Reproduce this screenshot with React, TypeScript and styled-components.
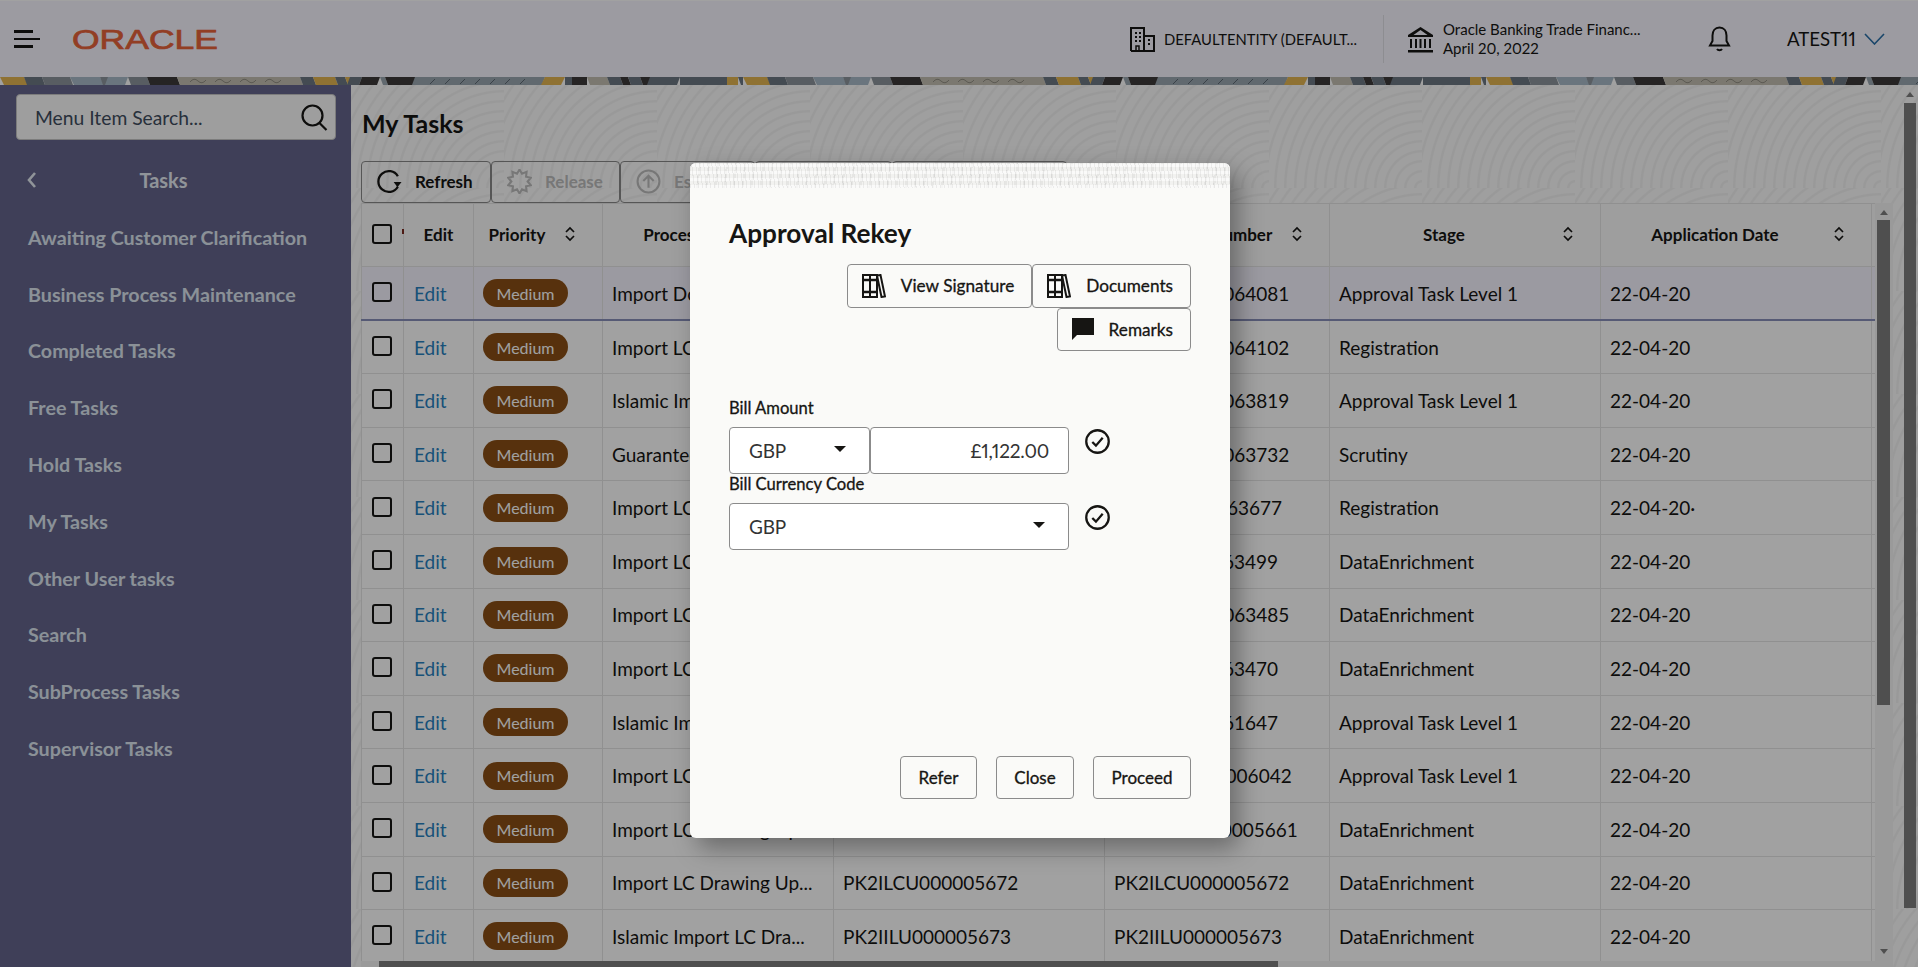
import styled, { createGlobalStyle } from "styled-components";

const GlobalStyle = createGlobalStyle`
  html, body { margin: 0; padding: 0; height: 100%; overflow: hidden; }
  body { font-family: Lato, "Noto Sans", sans-serif; color: #161513; background: #fff; }
  #root { height: 100%; }
  * { box-sizing: border-box; }
`;

const Page = styled.div`
  position: relative;
  display: flex;
  flex-direction: column;
  height: 967px;
  overflow: hidden;
`;

const Header = styled.header`
  display: flex;
  align-items: center;
  height: 77px;
  background: #f7f6ff;
  border-top: 1px solid #fff;
`;

const MenuButton = styled.div`
  display: flex;
  flex-direction: column;
  gap: 5px;
  width: 26px;
  margin-left: 14px;
  span { display: block; height: 2.5px; width: 19px; background: #161513; }
  span:nth-child(2) { width: 26px; }
`;

const Logo = styled.svg`
  width: 147px;
  height: 24px;
  margin-left: 32px;
  overflow: visible;
  text { font-family: "Liberation Sans", sans-serif; font-size: 27px; font-weight: 400; fill: #e8623a; stroke: #e8623a; stroke-width: 0.7; }
`;

const HeaderRight = styled.div`
  display: flex;
  align-items: center;
  margin-left: auto;
  height: 100%;
`;

const Entity = styled.div`
  display: flex;
  align-items: center;
  gap: 9px;
  font-size: 14.8px;
  color: #161513;
  width: 253px;
`;

const HeaderDivider = styled.div`
  width: 1px;
  height: 48px;
  background: #dfdfe6;
`;

const Branch = styled.div`
  display: flex;
  align-items: center;
  gap: 9px;
  margin-left: 23px;
  width: 301px;
`;

const BranchText = styled.div`
  font-size: 15px;
  line-height: 19px;
  color: #161513;
  font-feature-settings: "pnum";
`;

const BellWrap = styled.div`
  display: flex;
  width: 79px;
`;

const UserName = styled.div`
  display: flex;
  align-items: center;
  gap: 8px;
  margin-top: -1px;
  font-size: 18.6px;
  width: 131px;
  font-feature-settings: "pnum";
  svg { margin-top: 1px; }
`;

const Body = styled.div`
  display: flex;
  flex: 1;
  min-height: 0;
`;

const Sidebar = styled.nav`
  width: 351px;
  flex: none;
  background: #64648c;
  padding: 9px 15px 0 16px;
`;

const SearchBox = styled.div`
  display: flex;
  align-items: center;
  justify-content: space-between;
  height: 46px;
  padding: 0 7px 0 18px;
  background: #fbfbfb;
  border: 1px solid #c4c4c4;
  border-radius: 4px;
  font-size: 19.3px;
  color: #3f4c5e;
`;

const SideTitle = styled.div`
  display: flex;
  align-items: center;
  height: 44px;
  margin-top: 18px;
  padding-left: 10px;
  font-size: 20px;
  font-weight: 700;
  color: #e4ebf2;
  span { flex: 1; text-align: center; padding-right: 38px; margin-left: -9px; }
`;

const SideList = styled.ul`
  list-style: none;
  margin: 7px 0 0;
  padding: 0;
`;

const SideItem = styled.li`
  display: flex;
  align-items: center;
  height: 56.8px;
  margin-left: 12px;
  font-size: 19.7px;
  font-weight: 700;
  white-space: nowrap;
  color: #dde6f0;
`;

const Main = styled.main`
  display: flex;
  flex: 1;
  min-width: 0;
  background-color: #fcfcfc;
  background-image: repeating-radial-gradient(circle at 100% 100%, rgba(0,0,0,0) 0 5px, rgba(0,0,0,.036) 6px 7.5px, rgba(0,0,0,0) 8.5px 10px);
  background-size: 153px 103px;
  border-top-left-radius: 4px;
`;

const Content = styled.div`
  display: flex;
  flex-direction: column;
  width: 1542px;
  flex: none;
  padding-left: 10px;
`;

const PageTitle = styled.h1`
  margin: 0;
  height: 76px;
  padding: 23px 0 0 1px;
  font-size: 25px;
  line-height: 30px;
  font-weight: 700;
`;

const Toolbar = styled.div`
  display: flex;
  height: 42px;
  flex: none;
`;

const ToolButton = styled.button<{ $w: number; $off?: boolean }>`
  display: flex;
  align-items: center;
  gap: 13px;
  width: ${(p) => p.$w}px;
  height: 42px;
  padding: 0 0 2px 15px;
  background: transparent;
  border: 1px solid #888;
  border-radius: 4px;
  font-family: inherit;
  font-size: 17px;
  font-weight: 700;
  color: ${(p) => (p.$off ? "#bdbdbd" : "#161513")};
`;

const TableArea = styled.div`
  display: flex;
  height: 758px;
  flex: none;
`;

const TableWrap = styled.div`
  width: 1514px;
  flex: none;
  overflow: hidden;
`;

const Table = styled.table`
  width: 1514px;
  table-layout: fixed;
  border-collapse: collapse;
  background: #fff;
`;

const Col = styled.col<{ $w: number }>`
  width: ${(p) => p.$w}px;
`;

const Th = styled.th`
  height: 63px;
  padding: 0 0 2px;
  border: 1px solid #e5e5e5;
  font-size: 17px;
  font-weight: 700;
  color: #161513;
  background: #fafafa;
`;

const ThInner = styled.div`
  display: flex;
  align-items: center;
  span { flex: 1; text-align: center; white-space: nowrap; }
  svg { flex: none; margin: 0 27px 0 5px; }
`;

const Row = styled.tr<{ $active?: boolean }>`
  height: 53.6px;
  background: ${(p) => (p.$active ? "#f6f4ff" : "#ffffff")};
  ${(p) => (p.$active ? "border-bottom: 2px solid #898fba;" : "")}
`;

const Td = styled.td`
  padding: 0 9px;
  border-left: 1px solid #e5e5e5;
  border-right: 1px solid #e5e5e5;
  border-bottom: 1px solid #e5e5e5;
  font-size: 19px;
  color: #161513;
  white-space: nowrap;
  overflow: hidden;
  text-overflow: ellipsis;
`;

const CheckCell = styled.td`
  padding: 0 0 2px 10px;
  border-left: 1px solid #e5e5e5;
  border-right: 1px solid #e5e5e5;
  border-bottom: 1px solid #e5e5e5;
`;

const HeadCheckCell = styled.th`
  position: relative;
  padding: 0 0 3px 10px;
  border: 1px solid #e5e5e5;
  background: #fafafa;
  &::after {
    content: "";
    position: absolute;
    top: 25px;
    right: -1px;
    width: 2px;
    height: 5px;
    background: #7a2a20;
  }
`;

const Checkbox = styled.div`
  width: 20px;
  height: 20px;
  border: 2px solid #161513;
  border-radius: 3px;
  background: transparent;
`;

const EditLink = styled.a`
  margin-left: 1px;
  color: #2780bf;
  font-size: 19px;
`;

const Pill = styled.span`
  display: inline-flex;
  align-items: center;
  justify-content: center;
  width: 85px;
  height: 28px;
  border-radius: 14px;
  background: #8a4f15;
  color: #ffffff;
  font-size: 16px;
`;

const Scrollbar = styled.div<{ $w: number; $pad: number }>`
  display: flex;
  flex-direction: column;
  align-items: flex-start;
  width: ${(p) => p.$w}px;
  flex: none;
  padding-left: ${(p) => p.$pad}px;
`;

const Arrow = styled.div<{ $down?: boolean; $top: number; $bottom: number; $left: number }>`
  width: 0;
  height: 0;
  margin: ${(p) => p.$top}px 0 ${(p) => p.$bottom}px ${(p) => p.$left}px;
  border-left: 4px solid transparent;
  border-right: 4px solid transparent;
  ${(p) => (p.$down ? "border-top: 5px solid #7e7e7e; margin-top: auto;" : "border-bottom: 5px solid #7e7e7e;")}
`;

const Thumb = styled.div<{ $w: number; $h: number }>`
  width: ${(p) => p.$w}px;
  height: ${(p) => p.$h}px;
  background: #7e7e7e;
  flex: none;
`;

const InnerTrack = styled(Scrollbar)`
  background: #f4f4f4;
`;

const HScroll = styled.div`
  height: 6px;
  padding-left: 18px;
  background: #f4f4f4;
  div { width: 899px; height: 6px; background: #7e7e7e; }
`;

const Overlay = styled.div`
  position: absolute;
  inset: 0;
  z-index: 10;
  display: flex;
  justify-content: center;
  align-items: flex-start;
  padding: 163px 0 0 2px;
  background: rgba(0, 0, 0, 0.37);
`;

const Modal = styled.div`
  display: flex;
  flex-direction: column;
  width: 540px;
  height: 675px;
  background: #fafaf8;
  border-radius: 6px;
  box-shadow: 8px 10px 24px rgba(0, 0, 0, 0.35);
  overflow: hidden;
`;

const ModalBand = styled.div`
  height: 25px;
  flex: none;
  background-color: #f2f2f0;
  background-image:
    repeating-linear-gradient(83deg, rgba(0, 0, 0, 0.06) 0 1px, transparent 1px 4px),
    repeating-linear-gradient(0deg, rgba(255, 255, 255, 0.6) 0 3px, transparent 3px 7px),
    repeating-linear-gradient(97deg, rgba(0, 0, 0, 0.05) 0 2px, transparent 2px 9px);
`;

const ModalBody = styled.div`
  display: flex;
  flex-direction: column;
  flex: 1;
  padding: 0 39px 39px;
`;

const ModalTitle = styled.h2`
  margin: 0;
  padding-top: 29px;
  font-size: 26.2px;
  line-height: 32px;
  font-weight: 700;
`;

const ModalActions = styled.div`
  display: flex;
  flex-wrap: wrap;
  justify-content: flex-end;
  margin-top: 15px;
`;

const ActionButton = styled.button`
  display: flex;
  align-items: center;
  gap: 15px;
  height: 43.5px;
  padding: 0 17px 0 14px;
  background: transparent;
  border: 1px solid #8b8b8b;
  border-radius: 4px;
  font-family: inherit;
  font-size: 17.2px;
  -webkit-text-stroke: 0.3px #161513;
  color: #161513;
`;

const FieldLabel = styled.div<{ $top: number }>`
  height: 19px;
  margin-top: ${(p) => p.$top}px;
  font-size: 16.6px;
  line-height: 19px;
  -webkit-text-stroke: 0.3px #161513;
`;

const FieldRow = styled.div`
  display: flex;
  align-items: flex-start;
  margin-top: 9px;
  svg { margin: 2px 0 0 16px; }
`;

const Control = styled.div<{ $w: number; $right?: boolean }>`
  display: flex;
  align-items: center;
  justify-content: ${(p) => (p.$right ? "flex-end" : "space-between")};
  width: ${(p) => p.$w}px;
  height: 47px;
  padding: 0 19px;
  background: #fff;
  border: 1px solid #8b8b8b;
  border-radius: 4px;
  font-size: 19px;
  color: #333;
  letter-spacing: -0.2px;
  font-feature-settings: "pnum";
`;

const Caret = styled.div`
  width: 0;
  height: 0;
  margin: 0 4px 3px 0;
  border-left: 6px solid transparent;
  border-right: 6px solid transparent;
  border-top: 6px solid #161513;
`;

const ModalFooter = styled.div`
  display: flex;
  justify-content: flex-end;
  gap: 19px;
  margin-top: auto;
`;

const FooterButton = styled.button<{ $w: number }>`
  width: ${(p) => p.$w}px;
  height: 43px;
  background: transparent;
  border: 1px solid #8b8b8b;
  border-radius: 4px;
  font-family: inherit;
  font-size: 17px;
  -webkit-text-stroke: 0.3px #161513;
  color: #161513;
`;

const YEL = "#e3b552";
const DRK = "#3d3a3a";
const SLT = "#6d7883";
const BLU = "#a9bac8";
const WRM = "#c3bfb2";
const MID = "#8c949c";
const LGT = "#9aa6b0";

// x0, x1, colour, lean of the edge
const stripParts: [number, number, string, number][] = [
  [0, 24, YEL, 4], [24, 42, SLT, 3], [42, 70, MID, 3], [70, 100, BLU, 4], [100, 108, MID, 3],
  [108, 128, BLU, -3], [128, 147, MID, 3], [147, 177, DRK, 3], [177, 300, WRM, 3], [300, 313, SLT, 3],
  [313, 335, YEL, 3], [335, 345, SLT, 3], [345, 350, YEL, 3], [350, 362, SLT, -3], [362, 380, DRK, -3],
  [380, 385, LGT, 3], [385, 415, DRK, 3], [415, 545, LGT, -3], [545, 565, YEL, -4], [565, 572, SLT, 0],
  [572, 587, DRK, 0], [587, 607, WRM, 3], [607, 620, SLT, 3], [620, 628, DRK, 3], [628, 640, SLT, 3],
  [640, 650, DRK, 3], [650, 680, SLT, -3], [680, 727, SLT, 0], [727, 738, YEL, 0], [738, 743, SLT, 3],
];

const Strip = () => (
  <svg width="1918" height="8" style={{ display: "block", flex: "none" }}>
    <defs>
      <pattern id="strip" width="743" height="8" patternUnits="userSpaceOnUse">
        {stripParts.map(([a, b, c, lean]) => (
          <polygon key={a} points={`${a},0 ${b},0 ${b + lean},8 ${a + lean},8`} fill={c} />
        ))}
        {[430, 445, 460, 475, 490, 505, 520].map((x) => (
          <path key={x} d={`M${x} 7l5-5`} stroke="#5d6872" strokeWidth="1" />
        ))}
        {[190, 215, 240, 265].map((x) => (
          <path key={x} d={`M${x} 5q4-5 8-1t8-1`} stroke="#918e83" strokeWidth="1" fill="none" />
        ))}
      </pattern>
    </defs>
    <rect width="1918" height="8" fill="url(#strip)" />
  </svg>
);

const BuildingIcon = () => (
  <svg width="25" height="25" viewBox="0 0 25 25" fill="none" stroke="#161513" strokeWidth="2">
    <path d="M1 24V1h13v23M14 9h10v15H1" />
    <path d="M5 6h2M9 6h2M5 10h2M9 10h2M5 14h2M9 14h2M18 13h2M18 17h2" strokeWidth="2" />
    <path d="M6 24v-5h3v5" strokeWidth="1.5" />
  </svg>
);

const BankIcon = () => (
  <svg width="27" height="27" viewBox="0 0 27 27" fill="#161513">
    <path d="M13.5 1L1 9v2h25V9zM13.5 4l7 5h-14z" fillRule="evenodd" />
    <path d="M3 13h2v9H3zM8 13h2v9H8zM12.5 13h2v9h-2zM17 13h2v9h-2zM22 13h2v9h-2zM1 24h25v2.5H1z" />
  </svg>
);

const BellIcon = () => (
  <svg width="23" height="26" viewBox="0 0 23 26" fill="none" stroke="#161513" strokeWidth="2">
    <path d="M11.5 1.5C7 1.5 4.5 5 4.5 9.5V15L2 19.5h19L18.5 15V9.5C18.5 5 16 1.5 11.5 1.5z" />
    <path d="M9 23c1 1.6 4 1.6 5 0" />
  </svg>
);

const SearchIcon = () => (
  <svg width="27" height="27" viewBox="0 0 27 27" fill="none" stroke="#161513" strokeWidth="2.2">
    <circle cx="11.5" cy="11.5" r="10" />
    <path d="M18.5 19l7 7" />
  </svg>
);

const SortIcon = () => (
  <svg width="10" height="16" viewBox="0 0 10 16" fill="none" stroke="#161513" strokeWidth="1.7">
    <path d="M1 6l4-4 4 4M1 10l4 4 4-4" />
  </svg>
);

const RefreshIcon = () => (
  <svg width="25" height="25" viewBox="0 0 24 24" fill="none" stroke="#161513" strokeWidth="2.2">
    <path d="M20 7A10 10 0 1 0 20 17" />
    <path d="M16 12.5h7.5L19.7 17.5z" fill="#161513" stroke="none" />
  </svg>
);

const gearPoints = Array.from({ length: 20 }, (_, i) => {
  const r = i % 2 === 0 ? 11.5 : 7.8;
  const a = (i * Math.PI) / 10;
  return `${(12 + r * Math.sin(a)).toFixed(1)},${(12 - r * Math.cos(a)).toFixed(1)}`;
}).join(" ");

const ReleaseIcon = () => (
  <svg width="25" height="25" viewBox="0 0 24 24" fill="none" stroke="#bdbdbd" strokeWidth="2">
    <polygon points={gearPoints} />
  </svg>
);

const EscalateIcon = () => (
  <svg width="25" height="25" viewBox="0 0 24 24" fill="none" stroke="#bdbdbd" strokeWidth="2">
    <circle cx="12" cy="12" r="10.5" />
    <path d="M12 18V7M7 11.5L12 6.5l5 5" />
  </svg>
);

const BooksIcon = () => (
  <svg width="24" height="24" viewBox="0 0 24 24" fill="none" stroke="#161513" strokeWidth="2">
    <rect x="1" y="1" width="7" height="22" />
    <rect x="8" y="1" width="7" height="22" />
    <path d="M15 1.5l3.5-.5L23 22.5l-3.5.5z" />
    <path d="M1 6h14M1 18h14" strokeWidth="2.4" />
  </svg>
);

const CommentIcon = () => (
  <svg width="22" height="22" viewBox="0 0 22 22" fill="#161513">
    <path d="M0 0h22v17H5l-5 5z" />
  </svg>
);

const CheckCircle = () => (
  <svg width="25" height="25" viewBox="0 0 24 24" fill="none" stroke="#161513" strokeWidth="2.2">
    <circle cx="12" cy="12" r="10.8" />
    <path d="M7 12.5l3.5 3.5L17 8.5" />
  </svg>
);

const menuItems = [
  "Awaiting Customer Clarification",
  "Business Process Maintenance",
  "Completed Tasks",
  "Free Tasks",
  "Hold Tasks",
  "My Tasks",
  "Other User tasks",
  "Search",
  "SubProcess Tasks",
  "Supervisor Tasks",
];

const columns = [42, 70, 129, 231, 271, 225, 271, 271, 4];

const rows = [
  ["Import Documentary Co...", "PK2ILCU000064081", "Approval Task Level 1", "22-04-20"],
  ["Import LC Amendment", "PK2ILCU000064102", "Registration", "22-04-20"],
  ["Islamic Import LC Dra...", "PK2ILCU000063819", "Approval Task Level 1", "22-04-20"],
  ["Guarantee Issuance", "PK2ILCU000063732", "Scrutiny", "22-04-20"],
  ["Import LC Drawing Up...", "PK2IILU000063677", "Registration", "22-04-20·"],
  ["Import LC Drawing Up...", "PK2IIIU000063499", "DataEnrichment", "22-04-20"],
  ["Import LC Drawing Up...", "PK2ILCU000063485", "DataEnrichment", "22-04-20"],
  ["Import LC Drawing Up...", "PK2IIIU000063470", "DataEnrichment", "22-04-20"],
  ["Islamic Import LC Dra...", "PK2IIIU000061647", "Approval Task Level 1", "22-04-20"],
  ["Import LC Drawing Up...", "PK2ILDU000006042", "Approval Task Level 1", "22-04-20"],
  ["Import LC Drawing Up...", "PK2IMCU000005661", "DataEnrichment", "22-04-20"],
  ["Import LC Drawing Up...", "PK2ILCU000005672", "DataEnrichment", "22-04-20"],
  ["Islamic Import LC Dra...", "PK2IILU000005673", "DataEnrichment", "22-04-20"],
];

const App = () => {
  return (
    <Page>
      <GlobalStyle />
      <Header>
        <MenuButton>
          <span />
          <span />
          <span />
        </MenuButton>
        <Logo viewBox="0 0 147 24">
          <text x="0" y="21.5" textLength="146" lengthAdjust="spacingAndGlyphs">ORACLE</text>
        </Logo>
        <HeaderRight>
          <Entity>
            <BuildingIcon />
            <span>DEFAULTENTITY (DEFAULT...</span>
          </Entity>
          <HeaderDivider />
          <Branch>
            <BankIcon />
            <BranchText>
              Oracle Banking Trade Financ...
              <br />
              April 20, 2022
            </BranchText>
          </Branch>
          <BellWrap>
            <BellIcon />
          </BellWrap>
          <UserName>
            ATEST11
            <svg width="21" height="12" viewBox="0 0 21 12" fill="none" stroke="#2a6fa8" strokeWidth="1.6">
              <path d="M1 1l9.5 10L20 1" />
            </svg>
          </UserName>
        </HeaderRight>
      </Header>
      <Strip />
      <Body>
        <Sidebar>
          <SearchBox>
            Menu Item Search...
            <SearchIcon />
          </SearchBox>
          <SideTitle>
            <svg width="12" height="18" viewBox="0 0 12 18" fill="none" stroke="#e4ebf2" strokeWidth="2.6">
              <path d="M9 2L3 9l6 7" />
            </svg>
            <span>Tasks</span>
          </SideTitle>
          <SideList>
            {menuItems.map((item) => (
              <SideItem key={item}>{item}</SideItem>
            ))}
          </SideList>
        </Sidebar>
        <Main>
          <Content>
            <PageTitle>My Tasks</PageTitle>
            <Toolbar>
              <ToolButton $w={130}><RefreshIcon />Refresh</ToolButton>
              <ToolButton $w={129} $off><ReleaseIcon />Release</ToolButton>
              <ToolButton $w={135} $off><EscalateIcon />Escalate</ToolButton>
              <ToolButton $w={137} $off>Reassign</ToolButton>
              <ToolButton $w={175} $off>View Process</ToolButton>
            </Toolbar>
            <TableArea>
              <TableWrap>
                <Table>
                  <colgroup>
                    {columns.map((w, i) => (
                      <Col key={i} $w={w} />
                    ))}
                  </colgroup>
                  <thead>
                    <tr>
                      <HeadCheckCell><Checkbox /></HeadCheckCell>
                      <Th>Edit</Th>
                      <Th><ThInner><span>Priority</span><SortIcon /></ThInner></Th>
                      <Th><ThInner><span>Process Name</span><SortIcon /></ThInner></Th>
                      <Th><ThInner><span>Process Reference Number</span><SortIcon /></ThInner></Th>
                      <Th><ThInner><span>Application Number</span><SortIcon /></ThInner></Th>
                      <Th><ThInner><span>Stage</span><SortIcon /></ThInner></Th>
                      <Th><ThInner><span>Application Date</span><SortIcon /></ThInner></Th>
                      <Th />
                    </tr>
                  </thead>
                  <tbody>
                    {rows.map(([name, ref, stage, date], i) => (
                      <Row key={ref} $active={i === 0}>
                        <CheckCell><Checkbox /></CheckCell>
                        <Td><EditLink>Edit</EditLink></Td>
                        <Td><Pill>Medium</Pill></Td>
                        <Td>{name}</Td>
                        <Td>{ref}</Td>
                        <Td>{ref}</Td>
                        <Td>{stage}</Td>
                        <Td>{date}</Td>
                        <Td />
                      </Row>
                    ))}
                  </tbody>
                </Table>
              </TableWrap>
              <InnerTrack $w={18} $pad={2}>
                <Arrow $top={7} $bottom={5} $left={3} />
                <Thumb $w={13} $h={485} />
                <Arrow $down $top={0} $bottom={7} $left={3} />
              </InnerTrack>
            </TableArea>
            <HScroll><div /></HScroll>
          </Content>
          <Scrollbar $w={25} $pad={11}>
            <Arrow $top={7} $bottom={6} $left={2} />
            <Thumb $w={12} $h={805} />
          </Scrollbar>
        </Main>
      </Body>
      <Overlay>
        <Modal>
          <ModalBand />
          <ModalBody>
            <ModalTitle>Approval Rekey</ModalTitle>
            <ModalActions>
              <ActionButton><BooksIcon />View Signature</ActionButton>
              <ActionButton><BooksIcon />Documents</ActionButton>
              <ActionButton><CommentIcon />Remarks</ActionButton>
            </ModalActions>
            <FieldLabel $top={48}>Bill Amount</FieldLabel>
            <FieldRow>
              <Control $w={141}>GBP<Caret /></Control>
              <Control $w={199} $right>£1,122.00</Control>
              <CheckCircle />
            </FieldRow>
            <FieldLabel $top={1}>Bill Currency Code</FieldLabel>
            <FieldRow>
              <Control $w={340}>GBP<Caret /></Control>
              <CheckCircle />
            </FieldRow>
            <ModalFooter>
              <FooterButton $w={77}>Refer</FooterButton>
              <FooterButton $w={78}>Close</FooterButton>
              <FooterButton $w={98}>Proceed</FooterButton>
            </ModalFooter>
          </ModalBody>
        </Modal>
      </Overlay>
    </Page>
  );
};

export default App;
